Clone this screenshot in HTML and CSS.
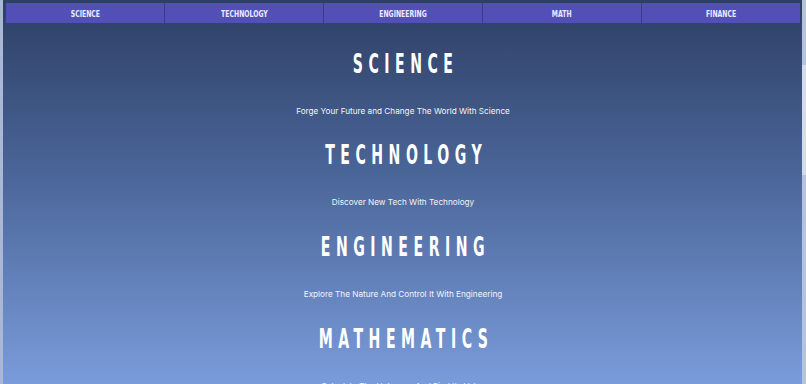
FILE: index.html
```html
<!DOCTYPE html>
<html>
<head>
<meta name="viewport" content="width=device-width, initial-scale=1">
<title>STEM</title>
<link rel="stylesheet" href="styles.css">
</head>
<body>

<div class="page">
  <div class="nav">
    <a class="nav-btn" href="#science"><span>SCIENCE</span></a>
    <a class="nav-btn" href="#technology"><span>TECHNOLOGY</span></a>
    <a class="nav-btn" href="#engineering"><span>ENGINEERING</span></a>
    <a class="nav-btn" href="#math"><span>MATH</span></a>
    <a class="nav-btn" href="#finance"><span>FINANCE</span></a>
  </div>

  <div class="section" id="science">
    <h1><span>SCIENCE</span></h1>
    <p>Forge Your Future and Change The World With Science</p>
  </div>

  <div class="section" id="technology">
    <h1><span>TECHNOLOGY</span></h1>
    <p>Discover New Tech With Technology</p>
  </div>

  <div class="section" id="engineering">
    <h1><span>ENGINEERING</span></h1>
    <p>Explore The Nature And Control It With Engineering</p>
  </div>

  <div class="section" id="math">
    <h1><span>MATHEMATICS</span></h1>
    <p>Calculate The Unknown And Find Its Value</p>
  </div>
</div>

<div class="scrollbar"><div class="thumb"></div></div>

</body>
</html>
```

FILE: styles.css
```css
* {box-sizing: border-box;}

html, body {
  margin: 0;
  height: 100%;
  overflow: hidden;
}

body {
  font-family: Inter, "Noto Sans", sans-serif;
  background: #a9b8d6;
  display: flex;
}

.page {
  flex: 1;
  height: 100%;
  margin-left: 3px;
  background: linear-gradient(to bottom, #2d3f64 0%, #4a6598 45%, #7a9cda 100%);
  padding: 3px 2px 0 3px;
}

.nav {
  display: flex;
  height: 20px;
  background: #3d3c8e;
}

.nav-btn {
  flex: 1;
  display: flex;
  align-items: center;
  justify-content: center;
  background: #5250b6;
  border-right: 1px solid #3c3b8a;
  color: #ecebff;
  text-decoration: none;
  font-family: "DejaVu Sans Condensed", "DejaVu Sans", sans-serif;
  font-stretch: condensed;
  font-weight: bold;
  font-size: 9.5px;
}

.nav-btn span {
  display: inline-block;
  transform: scaleX(0.72);
}

.nav-btn:last-child {
  border-right: none;
}

.section {
  height: 92px;
  text-align: center;
  color: #fff;
  padding-top: 28px;
}

#science {
  padding-top: 27px;
  height: 90px;
}

.section h1 {
  margin: 0;
  font-family: "DejaVu Sans Condensed", "DejaVu Sans", sans-serif;
  font-stretch: condensed;
  font-weight: bold;
  font-size: 27px;
  line-height: 28px;
}

.section h1 span {
  display: inline-block;
  letter-spacing: 9.5px;
  padding-left: 9.5px;
  transform: scaleX(0.58);
}

.section p {
  margin: 0;
  margin-top: 27px;
  font-size: 8.2px;
  line-height: 12px;
  color: #f2f4fb;
}

.scrollbar {
  width: 4px;
  height: 100%;
  background: #b7c3da;
  padding-top: 65px;
}

.thumb {
  height: 110px;
  background: #d6dbe6;
}
```
